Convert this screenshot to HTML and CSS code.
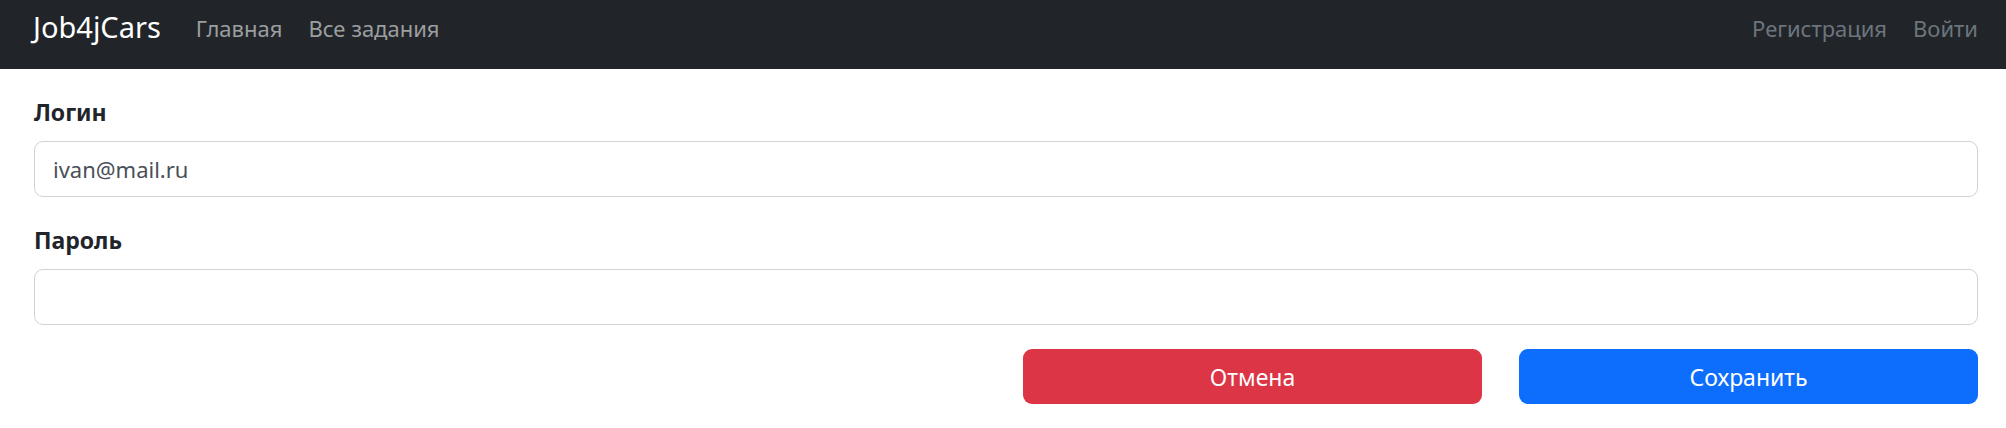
FILE: index.html
```html
<!DOCTYPE html>
<html lang="ru">
<head>
<meta charset="utf-8">
<title>Job4jCars</title>
<link rel="stylesheet" href="styles.css">
</head>
<body>
<nav class="navbar">
  <a class="brand" href="#">Job4jCars</a>
  <ul class="nav nav-main">
    <li><a href="#">Главная</a></li>
    <li><a href="#">Все задания</a></li>
  </ul>
  <ul class="nav nav-user">
    <li><a href="#">Регистрация</a></li>
    <li><a href="#">Войти</a></li>
  </ul>
</nav>
<main class="container">
  <form class="form">
    <div class="field">
      <label class="label" for="login">Логин</label>
      <input class="input" id="login" type="text" value="ivan@mail.ru">
    </div>
    <div class="field">
      <label class="label" for="password">Пароль</label>
      <input class="input" id="password" type="password">
    </div>
    <div class="actions">
      <button class="btn btn-danger" type="button">Отмена</button>
      <button class="btn btn-primary" type="submit">Сохранить</button>
    </div>
  </form>
</main>
</body>
</html>
```
FILE: styles.css
```css
* { box-sizing: border-box; }
body {
  margin: 0;
  font-family: "Noto Sans", "Open Sans", sans-serif;
  color: #212529;
  background: #fff;
}
.navbar {
  display: flex;
  align-items: center;
  height: 69px;
  padding: 0 28px 14px 33px;
  background: #212529;
}
.brand {
  font-size: 29px;
  line-height: 36px;
  padding-bottom: 1px;
  color: #fff;
  text-decoration: none;
  margin-right: 35px;
}
.nav {
  display: flex;
  gap: 26px;
  list-style: none;
  margin: 0;
  padding: 0;
}
.nav a {
  font-size: 22px;
  line-height: 36px;
  text-decoration: none;
}
.nav-main a { color: #9c9ea0; }
.nav-user { margin-left: auto; }
.nav-user a { color: #6c757d; }
.container {
  padding: 28px 28px 0 34px;
}
.field {
  display: flex;
  flex-direction: column;
  margin-bottom: 28px;
}
.label {
  font-size: 23px;
  font-weight: 700;
  line-height: 30px;
  margin-bottom: 14px;
}
.input {
  height: 56px;
  padding: 0 18px;
  font-family: inherit;
  font-size: 22px;
  color: #495057;
  border: 1px solid #ced4da;
  border-radius: 9px;
  background: #fff;
  outline: none;
}
.actions {
  display: flex;
  justify-content: flex-end;
  gap: 37px;
  margin-top: -4px;
}
.btn {
  width: 459px;
  height: 55px;
  font-family: inherit;
  font-size: 23px;
  color: #fff;
  border: none;
  border-radius: 9px;
  cursor: pointer;
}
.btn-danger { background: #dc3545; }
.btn-primary { background: #0d6efd; }
```
